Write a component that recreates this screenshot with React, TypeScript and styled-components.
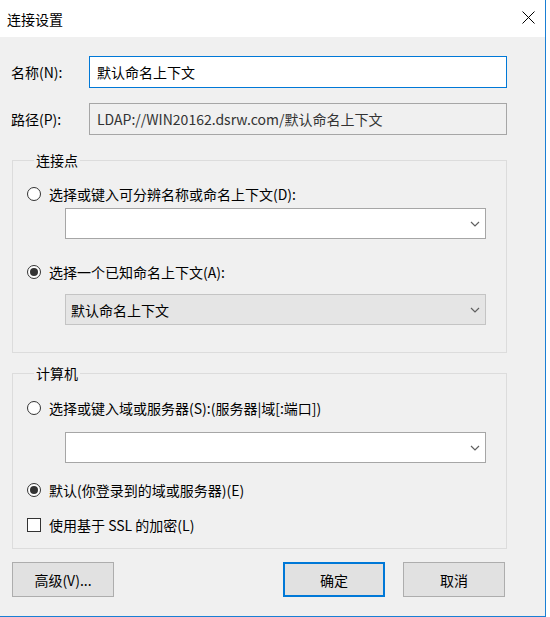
import React from 'react'
import styled, { createGlobalStyle } from 'styled-components';

const GlobalStyle = createGlobalStyle`
html, body {
  margin: 0;
  padding: 0;
  background: #ffffff;
}
body {
  font-family: "Noto Sans CJK SC", "Noto Sans", sans-serif;
  font-size: 14px;
  color: #000000;
}
* { box-sizing: border-box; }
`;

const Window = styled.div`
width: 546px;
height: 617px;
background: #f0f0f0;
border-right: 1px solid #1a7fd4;
border-bottom: 1px solid #1a7fd4;
display: flex;
flex-direction: column;
`;

const TitleBar = styled.div`
height: 37px;
background: #ffffff;
display: flex;
align-items: center;
justify-content: space-between;
padding: 0 10px 0 7px;
font-size: 14px;
line-height: 20px;
`;

const CloseIcon = styled.svg`
width: 13px;
height: 13px;
margin-bottom: 2px;
`;

const Body = styled.div`
flex: 1;
padding: 19px 0 0 11px;
display: flex;
flex-direction: column;
`;

const FieldRow = styled.div<{ $gap?: number }>`
display: flex;
align-items: center;
margin-top: ${p => p.$gap ?? 0}px;
`;

const FieldLabel = styled.label`
width: 78px;
line-height: 20px;
`;

const TextBox = styled.div<{ $focused?: boolean; $readOnly?: boolean }>`
width: 418px;
height: 32px;
display: flex;
align-items: center;
padding-left: 7px;
background: ${p => (p.$readOnly ? '#f0f0f0' : '#ffffff')};
border: 1px solid ${p => (p.$focused ? '#0078d7' : '#a6a6a6')};
color: ${p => (p.$readOnly ? '#333333' : '#000000')};
white-space: nowrap;
`;

const Group = styled.fieldset<{ $gap: number; $bottom: number }>`
width: 495px;
margin: ${p => p.$gap}px 0 0 1px;
padding: 0 0 ${p => p.$bottom}px 14px;
border: 1px solid #dcdcdc;
min-width: 0;
`;

const Legend = styled.legend`
margin-left: 7px;
padding: 0 2px;
line-height: 20px;
color: #000000;
`;

const OptionRow = styled.div<{ $gap: number }>`
display: flex;
align-items: center;
height: 20px;
margin-top: ${p => p.$gap}px;
gap: 8px;
line-height: 20px;
white-space: nowrap;
`;

const RadioMark = styled.span<{ $checked?: boolean }>`
width: 14px;
height: 14px;
border-radius: 50%;
border: 1px solid #333333;
background: #ffffff;
display: flex;
align-items: center;
justify-content: center;

&::after {
  content: '';
  width: 8px;
  height: 8px;
  border-radius: 50%;
  background: ${p => (p.$checked ? '#333333' : 'transparent')};
}
`;

const CheckMark = styled.span`
width: 14px;
height: 14px;
border: 1px solid #333333;
background: #ffffff;
`;

const Combo = styled.div<{ $gap: number; $disabled?: boolean }>`
width: 421px;
height: 31px;
margin: ${p => p.$gap}px 0 0 38px;
display: flex;
align-items: center;
justify-content: space-between;
padding: 0 5px 0 5px;
background: ${p => (p.$disabled ? '#e5e5e5' : '#ffffff')};
border: 1px solid ${p => (p.$disabled ? '#c4c4c4' : '#a6a6a6')};
`;

const Chevron = styled.svg`
width: 10px;
height: 6px;
`;

const ButtonRow = styled.div`
display: flex;
margin-top: 13px;
padding-left: 1px;
`;

const Button = styled.button<{ $default?: boolean; $gap?: number }>`
width: 102px;
height: 35px;
margin-left: ${p => p.$gap ?? 0}px;
font: inherit;
color: #000000;
background: #e1e1e1;
border: ${p => (p.$default ? '2px solid #0078d7' : '1px solid #adadad')};
padding: 0;
`;

const Arrow = () => (
  <Chevron viewBox="0 0 10 6">
    <path d="M1 1 L5 5 L9 1" fill="none" stroke="#606060" strokeWidth="1.2" />
  </Chevron>
);

export default function App() {
  return (
    <>
      <GlobalStyle />
      <Window>
        <TitleBar>
          <span>连接设置</span>
          <CloseIcon viewBox="0 0 13 13">
            <path d="M0.5 0.5 L12.5 12.5 M12.5 0.5 L0.5 12.5" stroke="#000" strokeWidth="1" />
          </CloseIcon>
        </TitleBar>
        <Body>
          <FieldRow>
            <FieldLabel>名称(N):</FieldLabel>
            <TextBox $focused>默认命名上下文</TextBox>
          </FieldRow>
          <FieldRow $gap={15}>
            <FieldLabel>路径(P):</FieldLabel>
            <TextBox $readOnly>LDAP://WIN20162.dsrw.com/默认命名上下文</TextBox>
          </FieldRow>

          <Group $gap={15} $bottom={27}>
            <Legend>连接点</Legend>
            <OptionRow $gap={14}>
              <RadioMark />
              <span>选择或键入可分辨名称或命名上下文(D):</span>
            </OptionRow>
            <Combo $gap={4}>
              <span />
              <Arrow />
            </Combo>
            <OptionRow $gap={23}>
              <RadioMark $checked />
              <span>选择一个已知命名上下文(A):</span>
            </OptionRow>
            <Combo $gap={12} $disabled>
              <span>默认命名上下文</span>
              <Arrow />
            </Combo>
          </Group>

          <Group $gap={10} $bottom={13}>
            <Legend>计算机</Legend>
            <OptionRow $gap={15}>
              <RadioMark />
              <span>选择或键入域或服务器(S):(服务器|域[:端口])</span>
            </OptionRow>
            <Combo $gap={14}>
              <span />
              <Arrow />
            </Combo>
            <OptionRow $gap={17}>
              <RadioMark $checked />
              <span>默认(你登录到的域或服务器)(E)</span>
            </OptionRow>
            <OptionRow $gap={15}>
              <CheckMark />
              <span>使用基于 SSL 的加密(L)</span>
            </OptionRow>
          </Group>

          <ButtonRow>
            <Button>高级(V)...</Button>
            <Button $default $gap={169}>确定</Button>
            <Button $gap={18}>取消</Button>
          </ButtonRow>
        </Body>
      </Window>
    </>
  );
}
